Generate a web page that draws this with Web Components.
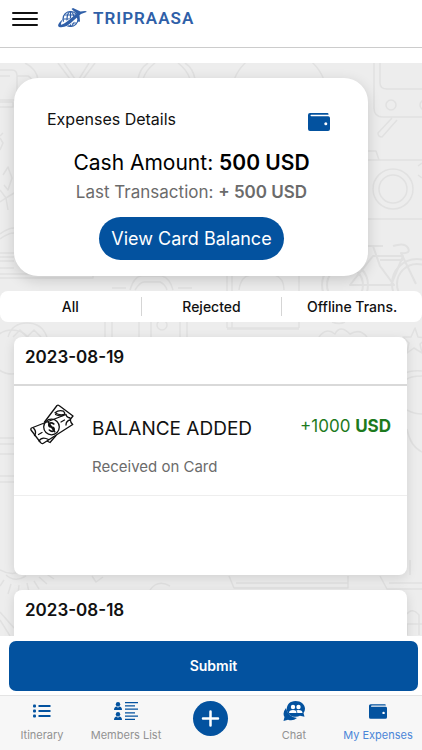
<!DOCTYPE html>
<html lang="en">
<head>
<meta charset="utf-8">
<meta name="viewport" content="width=device-width, initial-scale=1">
<title>Tripraasa – My Expenses</title>
<style>
  html, body { margin: 0; height: 100%; }
  body { font-family: Inter, "Liberation Sans", sans-serif; color: #111; background: #fff; --brand: #03529f; }
</style>
</head>
<body>
<expenses-app></expenses-app>
<script>
const define = (name, html) => {
  const template = document.createElement('template');
  template.innerHTML = html;
  customElements.define(name, class extends HTMLElement {
    constructor() {
      super();
      this.attachShadow({ mode: 'open' }).append(template.content.cloneNode(true));
    }
  });
};

define('wallet-icon', `
<style>:host { display: block; width: 22px; height: 18px; color: var(--brand); } svg { display: block; width: 100%; height: 100%; }</style>
<svg viewBox="0 0 22 18" aria-hidden="true">
  <path fill="currentColor" d="M2 0H19.500Q20.500 0 20.500 1.200V1.700H3.300Q2.500 1.700 2.500 2.500T3.300 3.300H20.200Q22 3.300 22 5V16Q22 18 20 18H2Q0 18 0 16V2Q0 0 2 0Z"/>
  <circle cx="17.800" cy="10.700" r="1.500" fill="#fff"/>
</svg>`);

define('money-icon', `
<style>:host { display: block; width: 44px; height: 41px; } svg { display: block; width: 100%; height: 100%; }</style>
<svg viewBox="0 0 44 41" fill="none" stroke="#111" stroke-width="1.300" stroke-linejoin="round" stroke-linecap="round" aria-hidden="true">
  <path d="M14.500 18 27 1.500Q28 .7 29 1.500L43 12 38.500 17.500M17 37 20 38.500 26 31.500"/>
  <path d="M25 8.800Q29 5.500 33.500 7.200Q35 8.500 34.800 10.200Q30 12 25 8.800Z"/>
  <path fill="#fff" d="M1.500 24 36 10.500Q36.500 13 38.500 13.500Q40.500 13.500 40.500 15.500Q40 18 42.700 20.500L13 39.500Q11.500 40 10.500 38.500L1 26Q.5 24.800 1.500 24Z"/>
  <path d="M3.500 24Q7 28 4.500 31.500M9 37Q12 32 18.500 35.500M8.500 30.500 12 28.500M31 18 34.500 16M36 21Q36 17 40 16"/>
  <path d="M25.500 10.500Q29 12.500 33.500 11.500" stroke-width="1.200"/>
  <circle cx="21.500" cy="23" r="7.800"/>
  <path stroke-width="1.600" d="M18.300 18.300 24.700 27.700M23.800 20Q20.500 17.500 18.800 20.500Q18.500 23 21.500 23T24.200 25.800Q22.500 28.800 19.300 26"/>
</svg>`);

define('brand-logo', `
<style>
  :host { display: flex; align-items: center; gap: 6px; color: #2f5fa8; }
  svg { display: block; width: 29px; height: 22px; }
  span { font: 600 17px/20px "Roboto", "Liberation Sans", sans-serif; letter-spacing: 1px; }
</style>
<svg viewBox="0 0 29 22" fill="none" stroke="currentColor" aria-hidden="true">
  <g stroke-width="1.200">
    <circle cx="12.500" cy="12" r="7.500"/><ellipse cx="12.500" cy="12" rx="3.500" ry="7.500"/>
    <path d="M5 12H20M6.500 8H18.500M6.500 16H18.500M12.500 4.500V19.500"/>
  </g>
  <path stroke="#fff" stroke-width="5" d="M3 18Q12 17 23 6"/>
  <path fill="currentColor" stroke="none" d="M5 12Q-2 18 1 20Q8 21.500 15.500 13.500L23 7 28.500 5Q29 4 27 4L22.500 4.500 15 1 13.500 2 18.500 6.500 11 13Q4 18.500 3 17.500Q2.500 16.500 5 12ZM18.500 10 20.500 15 22 14.500 21.500 7.500Z"/>
</svg>
<span>TRIPRAASA</span>`);

define('app-header', `
<style>
  :host { display: flex; align-items: flex-start; gap: 20px; height: 48px; padding: 7px 12px 0; box-sizing: border-box; border-bottom: 1px solid #ccc; }
  button { border: 0; padding: 5px 0 0; background: none; width: 26px; height: 19px; display: block; }
  svg { display: block; width: 26px; height: 14px; }
</style>
<button aria-label="Menu"><svg viewBox="0 0 26 14" stroke="#111" stroke-width="2" stroke-linecap="round"><path d="M1 1H25M1 7H25M1 13H25"/></svg></button>
<slot></slot>`);

define('travel-pattern', `
<style>:host { display: block; } svg { display: block; width: 100%; height: 100%; }</style>
<svg viewBox="0 63 422 573" preserveAspectRatio="xMidYMin slice" fill="none" stroke="#e1e1e1" stroke-width="1.500" stroke-linejoin="round" aria-hidden="true">
  <path d="M0 70H12Q17 70 17 76V100H0M0 76H10M17 76H28Q33 78 33 88V96M0 102H13V107H0M25 63Q37 69 38 80M58 63 70 79M64 63 75 79M95 63 83 79M89 63 79 79M138 79Q140 68 148 63M143 79Q146 70 155 63M195 79Q193 68 185 63M190 79Q187 70 178 63"/>
  <path d="M0 138 3 143 0 150M3 133 0 136M3 175 8 167 12 178 8 190 4 185M0 190 6 198 14 193M0 202 6 198 8 210M0 234Q8 228 14 228M0 239Q8 233 14 233M0 253H14M0 257H14M0 261H14M0 268H14M0 274H93V278H0"/>
  <circle cx="279" cy="97" r="48"/>
  <path d="M374 63V108Q374 117 383 117H422M380 63V83Q380 89 387 89H422M392 118 378 133Q378 137 382 137L397 120M368 151H376L379 160M368 160H422M418 166 422 163M418 175 422 178M368 219H422"/>
  <circle cx="391" cy="105" r="5"/><circle cx="425" cy="105" r="5"/><circle cx="393" cy="189" r="20"/><circle cx="393" cy="189" r="14"/>
  <g stroke-width="2">
    <circle cx="345" cy="285" r="18"/><circle cx="345" cy="285" r="23"/><circle cx="417" cy="284" r="20"/><circle cx="417" cy="284" r="25"/>
    <path d="M367 246H383M373 246 380 266 394 285H350L373 256H403L391 285M393 246Q405 242 408 248T401 253L416 284M380 260H403"/>
  </g>
  <path d="M130 290Q134 276 142 276H162Q170 278 173 290M135 290Q140 282 144 282H160Q165 284 167 290M112 288H126M178 288H192M227 275V328M232 275V328M239 290Q241 275 252 275H275Q284 278 284 290M299 275V328M227 275H299M227 328H299"/>
  <path d="M8 337Q12 323 27 323T47 337M13 337 20 330 27 337 34 330 41 337M105 322V337M112 322V337M139 322V337M151 322V337M180 322V337M187 322V337M227 329H299M319 337Q326 327 335 334Q340 324 350 334Q360 328 367 337M332 322Q339 325 345 322"/>
  <circle cx="162" cy="325" r="5"/><circle cx="12" cy="352" r="22"/>
  <path d="M415 328 418 337 427 338 420 344 422 353 414 348 407 353 409 343 403 337 411 337ZM404 374Q410 370 422 371M406 380Q410 376 422 376M407 410Q414 414 422 414M407 429Q410 446 422 452M0 438H14M0 444H14M0 454H14M0 476H14M0 482H14"/>
  <path d="M0 570Q12 577 25 570M6 575Q15 583 26 576M0 586 4 580M8 594 11 584M18 595 19 585M29 592 27 583M39 589 34 581M47 584 39 577M54 579 45 573M92 576 96 582 103 577M150 590Q158 579 170 586M229 576 234 588H348V576M236 583H348M380 576 387 589H422M389 583H422M410 560V575M407 614Q412 607 419 615V635M407 635V624H422M0 612 14 628M0 620 10 636"/>
</svg>`);

define('balance-card', `
<style>
  :host { display: block; background: #fff; border-radius: 24px; box-shadow: 0 4px 14px rgba(0,0,0,.16); padding: 31px 32px 16px 33px; }
  header { display: flex; justify-content: space-between; align-items: flex-start; padding-right: 6px; }
  h1 { margin: 0; font-size: 16px; line-height: 20px; font-weight: 400; }
  wallet-icon { margin-top: 4px; }
  .cash { margin: 19px 0 0; font-size: 21px; line-height: 26px; text-align: center; color: #000; }
  .last { margin: 4px 0 0; font-size: 17px; line-height: 24px; text-align: center; color: #6b6b6b; }
  b { font-weight: 600; }
  button { display: block; margin: 13px auto 0; height: 43px; padding: 0 12px; border: 0; border-radius: 22px; background: var(--brand); color: #fff; font: 400 18px/24px Inter, sans-serif; }
</style>
<header><h1>Expenses Details</h1><wallet-icon></wallet-icon></header>
<p class="cash">Cash Amount: <b>500 USD</b></p>
<p class="last">Last Transaction: <b>+ 500 USD</b></p>
<button>View Card Balance</button>`);

define('filter-bar', `
<style>
  :host { display: grid; grid-template-columns: repeat(3, 1fr); background: #fff; border-radius: 8px; height: 31px; align-items: center; }
  button { border: 0; border-left: 1px solid #d5d5d5; padding: 0; background: none; color: #111; font: 500 14px/19px Inter, sans-serif; }
  button:first-of-type { border-left: 0; }
</style>
<button>All</button><button>Rejected</button><button>Offline Trans.</button>`);

define('day-card', `
<style>
  :host { display: block; min-height: 238px; background: #fff; border-radius: 8px; box-shadow: 0 3px 12px rgba(0,0,0,.12); }
  h2 { margin: 0; padding: 9px 11px 16px; font-size: 17px; line-height: 22px; font-weight: 600; border-bottom: 2px solid #d9d9d9; }
</style>
<h2><slot name="date"></slot></h2><slot></slot>`);

define('transaction-row', `
<style>
  :host { display: grid; grid-template-columns: 44px 1fr auto; column-gap: 18px; padding: 18px 16px 18px; border-bottom: 1px solid #eee; }
  h3 { margin: 13px 0 0; font-size: 19px; line-height: 24px; font-weight: 400; color: #111; }
  p { margin: 16px 0 0; font-size: 15px; line-height: 20px; color: #6b6b6b; }
  .amount { margin-top: 11px; font-size: 17px; line-height: 22px; color: #1d7a1d; }
</style>
<money-icon></money-icon>
<div><h3><slot name="title"></slot></h3><p><slot name="note"></slot></p></div>
<div class="amount"><slot name="amount"></slot></div>`);

define('submit-bar', `
<style>
  :host { display: block; background: #fff; padding: 5px 4px 4px 9px; }
  button { display: block; width: 100%; height: 50px; border: 0; border-radius: 7px; background: var(--brand); color: #fff; font: 600 14px/20px Inter, sans-serif; }
</style>
<button><slot></slot></button>`);

define('nav-item', `
<style>
  :host { display: block; color: #929292; }
  :host([active]) { color: #4a86d8; }
  a { display: flex; flex-direction: column; align-items: center; color: inherit; text-decoration: none; font-size: 11px; line-height: 14px; white-space: nowrap; }
  .icon { display: flex; align-items: center; justify-content: center; height: 22px; margin-bottom: 6px; color: var(--brand); }
</style>
<a href="#"><span class="icon"><slot name="icon"></slot></span><slot></slot></a>`);

define('tab-bar', `
<style>
  :host { display: grid; grid-template-columns: repeat(5, 1fr); height: 55px; box-sizing: border-box; background: #f7f7f7; border-top: 1px solid #e4e4e4; padding: 4px 2px 0 0; }
  svg { display: block; }
  wallet-icon { width: 18px; height: 15px; }
  .add { display: block; justify-self: center; width: 35px; height: 35px; margin-top: 1px; padding: 0; border: 0; border-radius: 50%; background: var(--brand); }
</style>
<nav-item><svg slot="icon" width="18" height="14" viewBox="0 0 18 14" fill="currentColor"><rect y=".5" width="3" height="3" rx="1"/><rect y="5.500" width="3" height="3" rx="1"/><rect y="10.500" width="3" height="3" rx="1"/><path d="M5.500 1H17.500V3H5.500ZM5.500 6H17.500V8H5.500ZM5.500 11H17.500V13H5.500Z"/></svg>Itinerary</nav-item>
<nav-item><svg slot="icon" width="24" height="18" viewBox="0 0 24 18" fill="currentColor"><circle cx="4" cy="2.200" r="2.200"/><path d="M0 8Q0 4.500 3 4.500L4 6 5 4.500Q8 4.500 8 8Z"/><circle cx="4" cy="12.200" r="2.200"/><path d="M0 18Q0 14.500 3 14.500L4 16 5 14.500Q8 14.500 8 18Z"/><path d="M11 0H24V1.200H11ZM11 3.300H21V4.500H11ZM11 6.600H24V7.800H11ZM11 10.200H21V11.400H11ZM11 13.500H24V14.700H11ZM11 16.800H21V18H11Z"/></svg>Members List</nav-item>
<button class="add" aria-label="Add expense"><svg width="35" height="35" viewBox="0 0 35 35" stroke="#fff" stroke-width="2.500" stroke-linecap="round"><path d="M17.500 10.500V24.500M10 17.500H25"/></svg></button>
<nav-item><svg slot="icon" width="22" height="20" viewBox="0 0 22 20"><path fill="currentColor" d="M3 7Q-1 12 1.500 16L.5 20 5 18.800Q10 20.500 14 17Q5 16 3 7Z"/><path fill="currentColor" d="M12.500 0C7 0 3.800 3.600 3.800 8S7.500 15.800 12.500 15.800Q15 15.800 17 14.800L21.500 15.800 20.500 12Q22 10 22 7.800C22 3.500 18 0 12.500 0Z"/><g fill="#fff"><circle cx="10" cy="6" r="2.200"/><circle cx="15.500" cy="6" r="2.200"/><path d="M6 12Q6 9 10 9T13.500 12ZM14.300 12Q14.300 10 13.300 9.200Q19.500 8.200 19.500 12Z"/></g></svg>Chat</nav-item>
<nav-item active><wallet-icon slot="icon"></wallet-icon>My Expenses</nav-item>`);

define('expenses-app', `
<style>
  :host { display: flex; flex-direction: column; height: 100vh; }
  main { position: relative; flex: 1; min-height: 0; overflow: hidden; margin-top: 15px; background: #ededed; }
  travel-pattern { position: absolute; inset: 0; }
  .content { position: relative; display: grid; gap: 15px; padding-top: 15px; }
  balance-card { margin-left: 14px; margin-right: 54px; }
  day-card { margin: 0 15px 0 14px; }
  b { font-weight: 700; }
</style>
<app-header><brand-logo></brand-logo></app-header>
<main>
  <travel-pattern></travel-pattern>
  <div class="content">
    <balance-card></balance-card>
    <filter-bar></filter-bar>
    <day-card>
      <span slot="date">2023-08-19</span>
      <transaction-row>
        <span slot="title">BALANCE ADDED</span>
        <span slot="note">Received on Card</span>
        <span slot="amount">+1000 <b>USD</b></span>
      </transaction-row>
    </day-card>
    <day-card><span slot="date">2023-08-18</span></day-card>
  </div>
</main>
<submit-bar>Submit</submit-bar>
<tab-bar></tab-bar>`);
</script>
</body>
</html>
